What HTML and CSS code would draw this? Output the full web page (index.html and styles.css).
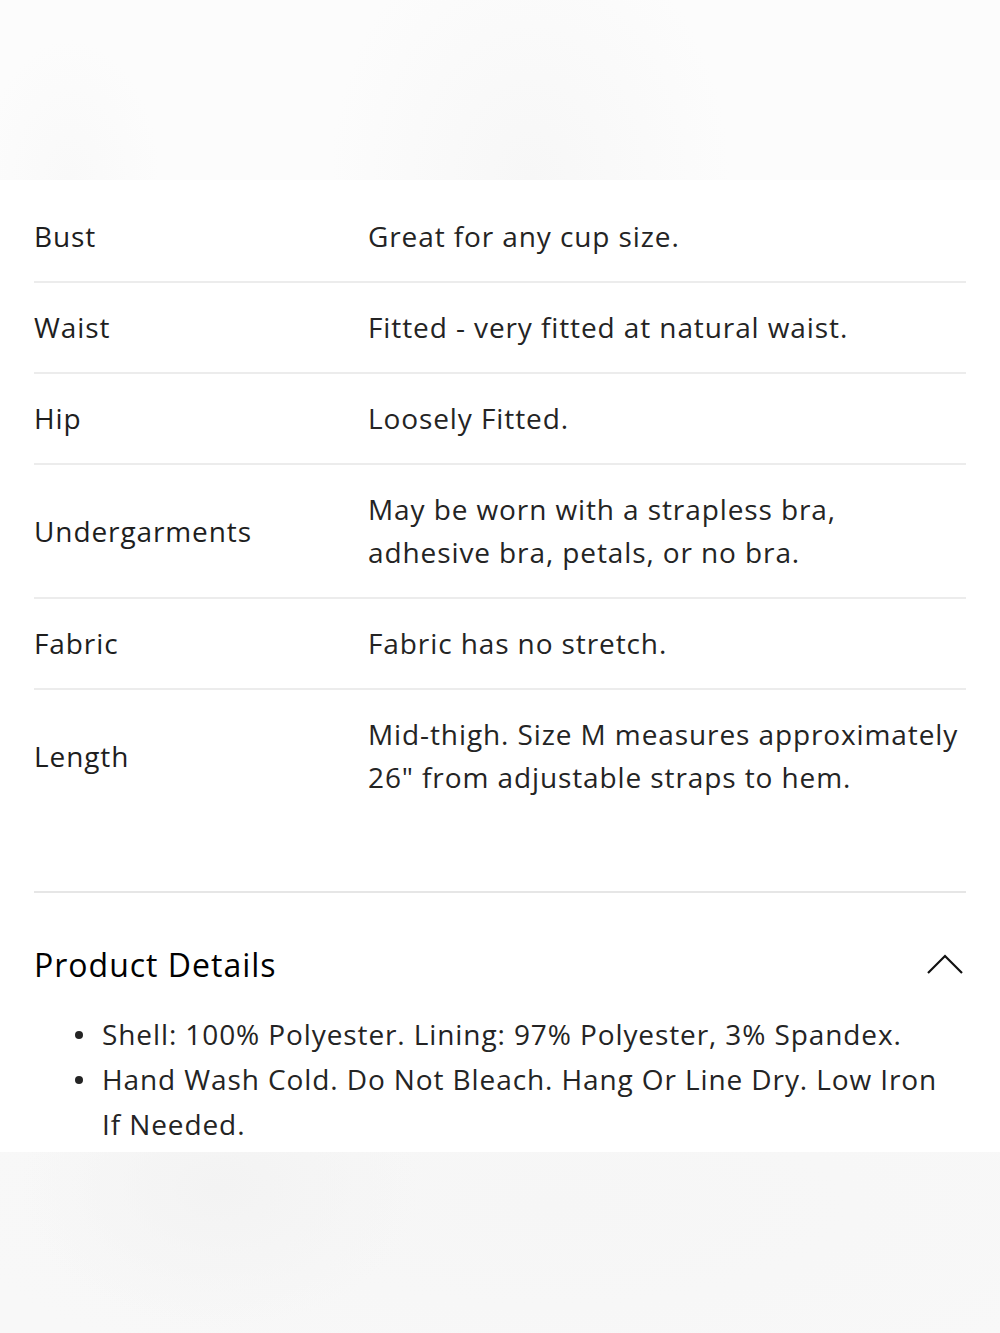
FILE: index.html
```html
<!DOCTYPE html>
<html lang="en">
<head>
    <meta charset="UTF-8">
    <meta name="viewport" content="width=device-width, initial-scale=1.0">
    <title>Fit &amp; Details</title>
    <link rel="stylesheet" href="styles.css">
</head>
<body>
    <div class="band band-top"></div>

    <div class="container">
        <div class="fit-table">
            <div class="fit-row">
                <div class="fit-label">Bust</div>
                <div class="fit-value">Great for any cup size.</div>
            </div>
            <div class="fit-row">
                <div class="fit-label">Waist</div>
                <div class="fit-value">Fitted - very fitted at natural waist.</div>
            </div>
            <div class="fit-row">
                <div class="fit-label">Hip</div>
                <div class="fit-value">Loosely Fitted.</div>
            </div>
            <div class="fit-row">
                <div class="fit-label">Undergarments</div>
                <div class="fit-value">May be worn with a strapless bra,<br>adhesive bra, petals, or no bra.</div>
            </div>
            <div class="fit-row">
                <div class="fit-label">Fabric</div>
                <div class="fit-value">Fabric has no stretch.</div>
            </div>
            <div class="fit-row">
                <div class="fit-label">Length</div>
                <div class="fit-value">Mid-thigh. Size M measures approximately<br>26" from adjustable straps to hem.</div>
            </div>
        </div>

        <div class="details">
            <div class="details-header">
                <h2>Product Details</h2>
                <svg class="chevron" width="36" height="22" viewBox="0 0 36 22">
                    <polyline points="1,19 18,2 35,19" fill="none" stroke="#111" stroke-width="2.2"/>
                </svg>
            </div>
            <ul class="details-list">
                <li>Shell: 100% Polyester. Lining: 97% Polyester, 3% Spandex.</li>
                <li>Hand Wash Cold. Do Not Bleach. Hang Or Line Dry. Low Iron If Needed.</li>
            </ul>
        </div>
    </div>

    <div class="band band-bottom"></div>
</body>
</html>
```

FILE: styles.css
```css
body {
    margin: 0;
    font-family: 'Open Sans', 'Lato', sans-serif;
    color: #242424;
    background: #fff;
    overflow: hidden;
}

.band {
    width: 100%;
}

.band-top {
    height: 180px;
    background:
        radial-gradient(ellipse 200px 260px at 53% 100%, #f7f7f7 0%, rgba(250,250,250,0) 100%),
        radial-gradient(ellipse 90px 140px at 7% 100%, #f9f9f9 0%, rgba(250,250,250,0) 100%),
        #fcfcfc;
}

.band-bottom {
    height: 181px;
    background:
        radial-gradient(ellipse 200px 140px at 22% 20%, #f3f3f3 0%, rgba(246,246,246,0) 100%),
        radial-gradient(ellipse 600px 200px at 55% 30%, #f6f6f6 0%, rgba(248,248,248,0) 100%),
        #f8f8f8;
}

.container {
    padding: 12px 34px 0;
}

.fit-row {
    display: grid;
    grid-template-columns: 334px 1fr;
    align-items: center;
    padding: 23px 0;
    border-bottom: 2px solid #ececec;
    font-size: 28px;
    letter-spacing: 0.9px;
    line-height: 43px;
}

.fit-row:last-child {
    border-bottom: none;
}

.fit-label {
    color: #1e1e1e;
}

.details {
    margin-top: 69px;
    border-top: 2px solid #e6e6e6;
    padding-top: 49px;
}

.details-header {
    display: flex;
    justify-content: space-between;
    align-items: center;
}

.details-header h2 {
    margin: 0;
    font-size: 32px;
    letter-spacing: 1px;
    font-weight: 400;
    color: #000;
    line-height: 46px;
}

.chevron {
    margin-right: 3px;
}

.details-list {
    list-style: none;
    margin: 24px 0 0;
    padding: 0 14px 0 68px;
    font-size: 28px;
    letter-spacing: 0.9px;
    line-height: 45px;
    height: 140px;
}

.details-list li {
    display: flex;
}

.details-list li::before {
    content: '';
    flex: none;
    width: 8px;
    height: 8px;
    border-radius: 50%;
    background: #242424;
    margin: 19px 19px 0 -27px;
}
```
